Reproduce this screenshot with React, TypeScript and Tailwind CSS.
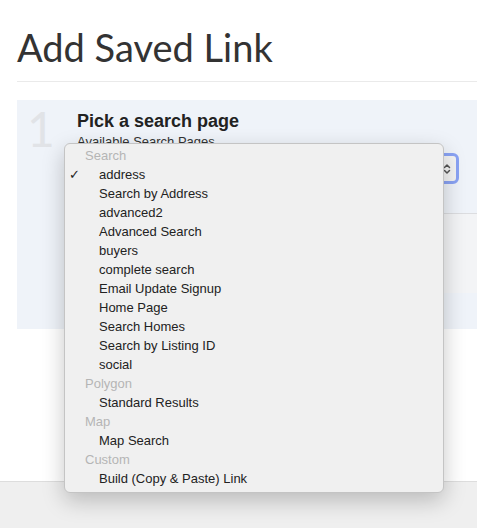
import { ChevronsUpDown } from "lucide-react"

type Row = { label: string; group?: boolean; checked?: boolean }

const rows: Row[] = [
    { label: "Search", group: true },
    { label: "address", checked: true },
    { label: "Search by Address" },
    { label: "advanced2" },
    { label: "Advanced Search" },
    { label: "buyers" },
    { label: "complete search" },
    { label: "Email Update Signup" },
    { label: "Home Page" },
    { label: "Search Homes" },
    { label: "Search by Listing ID" },
    { label: "social" },
    { label: "Polygon", group: true },
    { label: "Standard Results" },
    { label: "Map", group: true },
    { label: "Map Search" },
    { label: "Custom", group: true },
    { label: "Build (Copy & Paste) Link" },
]

export default function App() {
    return (
        <div className="relative w-[477px] h-[528px] overflow-hidden bg-white flex flex-col">
            <div className="flex-1 pl-[17px]">
                <h1 className="pt-[24px] text-[38px] leading-[47px] text-[#333] font-['Lato',sans-serif]">
                    Add Saved Link
                </h1>
                <div className="mt-[10px] h-px bg-[#eaeaea]" />

                {/* step panel */}
                <div className="mt-[18px] h-[229px] bg-[#eff3f9] flex">
                    <div className="w-[60px] pl-[10px] pt-[5px] text-[48px] leading-[48px] font-normal text-[#e1e3e7] font-['Lato',sans-serif]">
                        1
                    </div>
                    <div className="flex-1 pt-[11px] font-['Liberation_Sans',Arial,sans-serif]">
                        <div className="text-[18px] leading-[20px] font-bold text-[#222]">Pick a search page</div>
                        <div className="mt-[3px] text-[13px] leading-[15px] text-[#333]">Available Search Pages</div>
                        <div className="mt-[4px] mr-[18px] h-[31px] rounded-[6px] border-[3px] border-[#8aa3f4] bg-[#f4f4f4] flex items-center justify-end pr-[3px]">
                            <ChevronsUpDown className="h-[12px] w-[12px] text-[#555]" strokeWidth={3} />
                        </div>
                        <div className="mt-[29px] h-[80px] border-t border-[#dcdde0] bg-[#f3f4f6]" />
                    </div>
                </div>
            </div>

            {/* footer */}
            <div className="h-[47px] border-t border-[#dddddd] bg-[#efefef]" />

            {/* open select menu */}
            <div className="absolute left-[64px] top-[143px] w-[380px] rounded-[6px] border border-[#c4c4c4] bg-[#f0f0f0] pt-[2px] pb-[4px] shadow-[0_8px_22px_rgba(0,0,0,0.22)] font-['Liberation_Sans',Arial,sans-serif] text-[13px]">
                {rows.map((r, i) => (
                    <div key={i} className="relative h-[19px] leading-[19px]">
                        {r.checked && <span className="absolute left-[4px] text-[#222]">✓</span>}
                        {r.group ? (
                            <span className="pl-[20px] text-[#b5b5b5]">{r.label}</span>
                        ) : (
                            <span className="pl-[34px] text-[#222]">{r.label}</span>
                        )}
                    </div>
                ))}
            </div>
        </div>
    )
}
